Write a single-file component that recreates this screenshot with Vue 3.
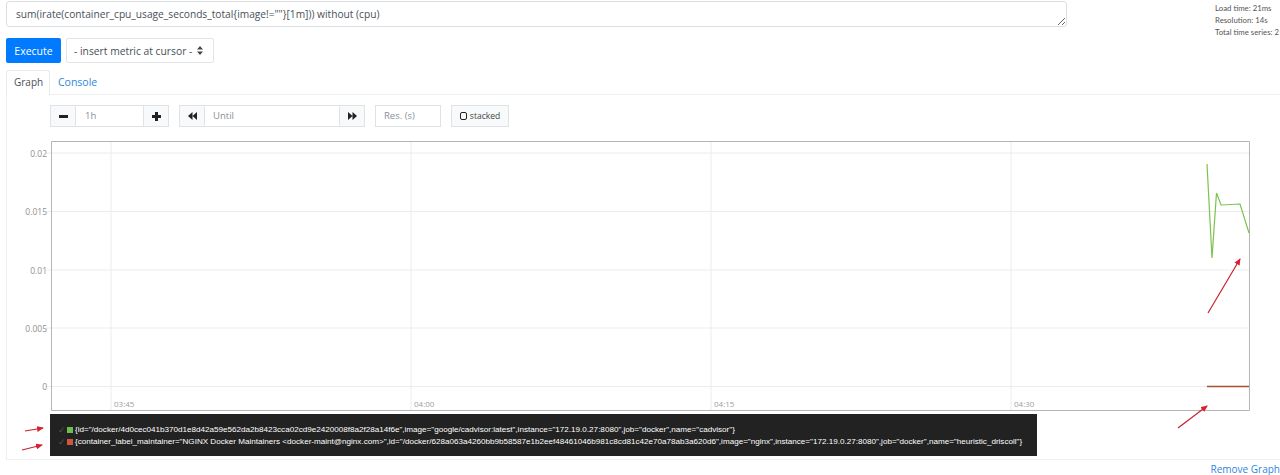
<script setup>
const yTicks = [
  { label: '0.02', y: 153 },
  { label: '0.015', y: 211.5 },
  { label: '0.01', y: 270 },
  { label: '0.005', y: 328 },
  { label: '0', y: 386.5 },
]
const xTicks = [
  { label: '03:45', x: 111 },
  { label: '04:00', x: 411 },
  { label: '04:15', x: 711 },
  { label: '04:30', x: 1011 },
]
const arrows = [
  { x1: 1208, y1: 313, x2: 1240, y2: 259 },
  { x1: 1178, y1: 428, x2: 1207, y2: 406 },
  { x1: 25, y1: 431, x2: 43, y2: 428 },
  { x1: 22, y1: 450, x2: 42, y2: 445 },
]
const series = [
  {
    color: '#6cc04a',
    text: '{id="/docker/4d0cec041b370d1e8d42a59e562da2b8423cca02cd9e2420008f8a2f28a14f6e",image="google/cadvisor:latest",instance="172.19.0.27:8080",job="docker",name="cadvisor"}',
  },
  {
    color: '#d0573c',
    text: '{container_label_maintainer="NGINX Docker Maintainers <docker-maint@nginx.com>",id="/docker/628a063a4260bb9b58587e1b2eef48461046b981c8cd81c42e70a78ab3a620d6",image="nginx",instance="172.19.0.27:8080",job="docker",name="heuristic_driscoll"}',
  },
]
</script>

<template>
  <div class="page">
    <div class="top">
      <textarea class="expr" readonly>sum(irate(container_cpu_usage_seconds_total{image!=""}[1m])) without (cpu)</textarea>
      <div class="stats">
        <div>Load time: 21ms</div>
        <div>Resolution: 14s</div>
        <div>Total time series: 2</div>
      </div>
    </div>

    <div class="actions">
      <button class="execute">Execute</button>
      <div class="metric">
        <span>- insert metric at cursor -</span>
        <svg width="6" height="9" viewBox="0 0 6 9"><path d="M0 3.6 3 0l3 3.6zM0 5.4h6L3 9z" fill="#444" /></svg>
      </div>
    </div>

    <div class="tabs">
      <div class="tab active">Graph</div>
      <div class="tab link">Console</div>
    </div>

    <div class="panel">
      <div class="controls">
        <div class="group">
          <div class="btn square">
            <svg width="9" height="9" viewBox="0 0 9 9"><path d="M0 3h9v3H0z" fill="#222" /></svg>
          </div>
          <div class="field range">1h</div>
          <div class="btn square">
            <svg width="9" height="9" viewBox="0 0 9 9"><path d="M3 0h3v3h3v3H6v3H3V6H0V3h3z" fill="#222" /></svg>
          </div>
        </div>
        <div class="group">
          <div class="btn square">
            <svg width="9" height="8" viewBox="0 0 9 8"><path d="M4.5 0v8L0 4zM9 0v8L4.5 4z" fill="#222" /></svg>
          </div>
          <div class="field until">Until</div>
          <div class="btn square">
            <svg width="9" height="8" viewBox="0 0 9 8"><path d="M0 0v8l4.500-4zM4.500 0v8L9 4z" fill="#222" /></svg>
          </div>
        </div>
        <div class="field res">Res. (s)</div>
        <div class="btn stacked"><span class="box"></span>stacked</div>
      </div>

      <svg class="chart" width="1273" height="273" viewBox="7 139 1273 273">
        <g stroke="#ececec" stroke-width="1">
          <line v-for="t in yTicks" :key="t.label" x1="46" x2="1250" :y1="t.y" :y2="t.y" />
          <line v-for="t in xTicks" :key="t.label" :x1="t.x" :x2="t.x" y1="141" y2="410" />
        </g>
        <path d="M51.500 141.500H1249.500V410.500H51.500Z" fill="none" stroke="#b5b5b5" />
        <text v-for="t in yTicks" :key="t.label" class="tick" x="47" :y="t.y + 3.500" text-anchor="end">{{ t.label }}</text>
        <text v-for="t in xTicks" :key="t.label" class="tick time" :x="t.x + 3" y="407">{{ t.label }}</text>
        <polyline points="1207,164 1212,258 1216.500,193 1221,205 1240,204 1249,233" fill="none" stroke="#7cc24f" stroke-width="1.200" />
        <line x1="1207" x2="1249" y1="386.500" y2="386.500" stroke="#a8502f" stroke-width="1.300" />
      </svg>

      <div class="legend">
        <div v-for="s in series" :key="s.color" class="legend-row">
          <span class="check">✓</span>
          <span class="swatch" :style="{ background: s.color }"></span>
          <span>{{ s.text }}</span>
        </div>
      </div>
    </div>

    <div class="remove"><span>Remove Graph</span></div>

    <svg class="arrows" width="1280" height="475" viewBox="0 0 1280 475">
      <defs>
        <marker id="head" markerWidth="7" markerHeight="6" refX="6" refY="3" orient="auto" markerUnits="userSpaceOnUse">
          <path d="M0 0 7 3 0 6z" fill="#d9202e" />
        </marker>
      </defs>
      <line
        v-for="a in arrows"
        :key="a.x1"
        :x1="a.x1"
        :y1="a.y1"
        :x2="a.x2"
        :y2="a.y2"
        stroke="#c9202e"
        stroke-width="1.200"
        marker-end="url(#head)"
      />
    </svg>
  </div>
</template>

<style scoped>
.page {
  position: relative;
  width: 1280px;
  height: 475px;
  overflow: hidden;
  background: #fff;
  font-family: "Open Sans", "Liberation Sans", sans-serif;
  font-size: 10px;
  color: #495057;
  box-sizing: border-box;
}
.top {
  display: flex;
  justify-content: space-between;
  padding: 1px 0 0 6px;
  height: 38px;
  box-sizing: border-box;
}
.expr {
  width: 1061px;
  height: 26px;
  box-sizing: border-box;
  padding: 4px 9px;
  border: 1px solid #dcdfe2;
  border-radius: 3px;
  font: 10.200px/16px "Open Sans", sans-serif;
  color: #495057;
  outline: none;
}
.stats {
  width: 65px;
  white-space: nowrap;
  font-family: "Lato", sans-serif;
  font-size: 7.800px;
  line-height: 12px;
  color: #555;
  padding-top: 1px;
}
.actions {
  display: flex;
  gap: 5px;
  padding-left: 6px;
  height: 25px;
}
.execute {
  width: 55px;
  height: 25px;
  padding: 0;
  border: 0;
  border-radius: 2px;
  background: #007bff;
  color: #fff;
  font: 10.500px "Open Sans", sans-serif;
}
.metric {
  width: 148px;
  box-sizing: border-box;
  border: 1px solid #e2e4e7;
  border-radius: 2px;
  display: flex;
  align-items: center;
  justify-content: space-between;
  padding: 0 10px 0 7px;
  font-size: 10.300px;
  color: #495057;
}
.tabs {
  display: flex;
  margin: 7px 0 0 6px;
  height: 25px;
}
.tab {
  padding: 0 8px;
  line-height: 25px;
  font-size: 10.500px;
}
.tab.active {
  background: #fff;
  border: 1px solid #e8eaec;
  border-bottom: 0;
  border-radius: 3px 3px 0 0;
  color: #495057;
  position: relative;
  z-index: 1;
  height: 25px;
  box-sizing: border-box;
  width: 44px;
  line-height: 23px;
  font-size: 10px;
  padding: 0 7px;
}
.tab.link {
  color: #2e86de;
}
.panel {
  margin: -1px 0 0 6px;
  height: 366px;
  box-sizing: border-box;
  border: 1px solid #eeeff1;
  border-right: 0;
  padding-top: 10px;
}
.controls {
  display: flex;
  gap: 10px;
  margin-left: 43px;
  height: 22px;
}
.group {
  display: flex;
}
.btn {
  display: flex;
  flex: none;
  align-items: center;
  justify-content: center;
  box-sizing: border-box;
  height: 22px;
  background: #f7f9fa;
  border: 1px solid #e0e3e6;
}
.square {
  width: 26px;
}
.field {
  box-sizing: border-box;
  height: 22px;
  line-height: 20px;
  border: 1px solid #e0e3e6;
  border-width: 1px 0;
  padding-left: 9px;
  color: #8a9097;
  font-size: 9.500px;
}
.range {
  width: 67px;
}
.until {
  width: 134px;
  padding-left: 8px;
}
.res {
  width: 66px;
  border-width: 1px;
  padding-left: 8px;
}
.stacked {
  width: 58px;
  gap: 3px;
  font-size: 8.500px;
  line-height: 18px;
  color: #444;
}
.box {
  width: 5px;
  height: 6px;
  border: 1.500px solid #222;
  border-radius: 2px;
}
.chart {
  display: block;
  margin-top: 12px;
}
.tick {
  font-size: 8.500px;
  fill: #8f8f8f;
}
.time {
  font-size: 8px;
  fill: #a0a0a0;
}
.legend {
  margin: 2px 0 0 43px;
  width: 987px;
  height: 42px;
  box-sizing: border-box;
  padding: 10px 0 0 8px;
  background: #222;
  color: #fff;
  font: 8.100px/12px "Liberation Sans", sans-serif;
  white-space: nowrap;
  overflow: hidden;
}
.legend-row {
  display: flex;
  align-items: center;
}
.check {
  flex: none;
  width: 9px;
  color: #555;
  font-size: 9px;
}
.swatch {
  flex: none;
  width: 6px;
  height: 6px;
  margin-right: 2px;
}
.remove {
  display: flex;
  justify-content: flex-end;
  margin-top: 2px;
  font-size: 10px;
  line-height: 15px;
  color: #2e86de;
}
.arrows {
  position: absolute;
  top: 0;
  left: 0;
  pointer-events: none;
}
</style>
